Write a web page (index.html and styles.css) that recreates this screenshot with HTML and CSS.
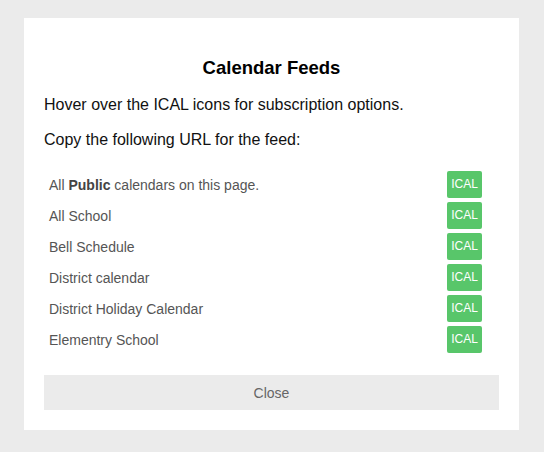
FILE: index.html
```html
<!DOCTYPE html>
<html>
<head>
<meta charset="utf-8">
<link rel="stylesheet" href="styles.css">
</head>
<body>
<div class="modal">
  <h2 class="title">Calendar Feeds</h2>
  <p class="intro">Hover over the ICAL icons for subscription options.</p>
  <p class="intro">Copy the following URL for the feed:</p>
  <div class="feeds">
    <div class="feed"><span class="name">All <b>Public</b> calendars on this page.</span><span class="ical">ICAL</span></div>
    <div class="feed"><span class="name">All School</span><span class="ical">ICAL</span></div>
    <div class="feed"><span class="name">Bell Schedule</span><span class="ical">ICAL</span></div>
    <div class="feed"><span class="name">District calendar</span><span class="ical">ICAL</span></div>
    <div class="feed"><span class="name">District Holiday Calendar</span><span class="ical">ICAL</span></div>
    <div class="feed"><span class="name">Elementry School</span><span class="ical">ICAL</span></div>
  </div>
  <button class="close">Close</button>
</div>
</body>
</html>
```
FILE: styles.css
```css
html, body {
  margin: 0;
  padding: 0;
  background: #ebebeb;
  font-family: "Liberation Sans", Arial, sans-serif;
}
.modal {
  background: #fff;
  width: 455px;
  margin: 18px 0 0 24px;
  padding: 39px 20px 20px 20px;
  display: flex;
  flex-direction: column;
}
.title {
  margin: 0;
  font-size: 18.5px;
  font-weight: bold;
  text-align: center;
  color: #000;
  line-height: 22px;
}
.intro {
  margin: 16px 0 0 0;
  font-size: 16px;
  line-height: 20px;
  color: #111;
}
.intro + .intro {
  margin-top: 15px;
}
.feeds {
  margin-top: 19px;
  display: flex;
  flex-direction: column;
}
.feed {
  display: flex;
  align-items: center;
  justify-content: space-between;
  height: 31px;
  padding: 0 17px 0 5px;
}
.name {
  font-size: 14px;
  color: #555;
}
.name b {
  color: #444;
}
.ical {
  width: 35px;
  height: 27px;
  box-sizing: border-box;
  background: #58c66a;
  border-radius: 2px;
  color: #fff;
  font-size: 12px;
  line-height: 26px;
  text-align: center;
}
.close {
  margin-top: 20px;
  height: 35px;
  border: none;
  background: #ebebeb;
  color: #666;
  font-family: "Liberation Sans", Arial, sans-serif;
  font-size: 14px;
  padding: 0;
}
```
